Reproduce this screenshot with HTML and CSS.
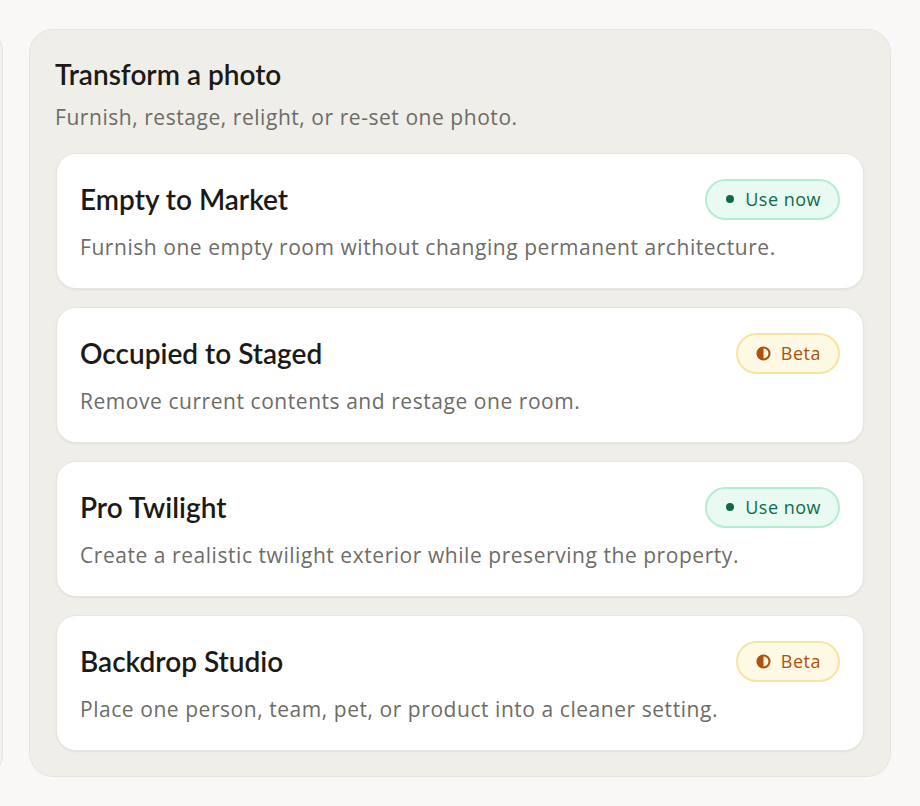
FILE: index.html
```html
<!DOCTYPE html>
<html lang="en">
<head>
<meta charset="utf-8">
<title>Transform a photo</title>
<link rel="stylesheet" href="styles.css">
</head>
<body>
<div class="layout">
  <aside class="side-panel"></aside>
  <section class="panel">
    <header class="panel-head">
      <h2 class="panel-title">Transform a photo</h2>
      <p class="panel-sub">Furnish, restage, relight, or re-set one photo.</p>
    </header>
    <div class="cards">
      <article class="card">
        <div class="card-top">
          <h3 class="card-title">Empty to Market</h3>
          <span class="badge badge-ready"><span class="dot"></span>Use now</span>
        </div>
        <p class="card-desc">Furnish one empty room without changing permanent architecture.</p>
      </article>
      <article class="card">
        <div class="card-top">
          <h3 class="card-title">Occupied to Staged</h3>
          <span class="badge badge-beta"><svg class="half" viewBox="0 0 14 14" width="15" height="15"><circle cx="7" cy="7" r="5.6" fill="none" stroke="currentColor" stroke-width="2"/><path d="M7 1.4 A5.6 5.6 0 0 0 7 12.6 Z" fill="currentColor"/></svg>Beta</span>
        </div>
        <p class="card-desc">Remove current contents and restage one room.</p>
      </article>
      <article class="card">
        <div class="card-top">
          <h3 class="card-title">Pro Twilight</h3>
          <span class="badge badge-ready"><span class="dot"></span>Use now</span>
        </div>
        <p class="card-desc">Create a realistic twilight exterior while preserving the property.</p>
      </article>
      <article class="card">
        <div class="card-top">
          <h3 class="card-title">Backdrop Studio</h3>
          <span class="badge badge-beta"><svg class="half" viewBox="0 0 14 14" width="15" height="15"><circle cx="7" cy="7" r="5.6" fill="none" stroke="currentColor" stroke-width="2"/><path d="M7 1.4 A5.6 5.6 0 0 0 7 12.6 Z" fill="currentColor"/></svg>Beta</span>
        </div>
        <p class="card-desc">Place one person, team, pet, or product into a cleaner setting.</p>
      </article>
    </div>
  </section>
</div>
</body>
</html>
```
FILE: styles.css
```css
* { box-sizing: border-box; }
html, body { margin: 0; padding: 0; }
body {
  background: #f9f8f6;
  font-family: "Open Sans", "Noto Sans", sans-serif;
  color: #1c1b19;
  width: 920px;
  height: 806px;
  overflow: hidden;
}
.layout {
  display: flex;
  gap: 26px;
  padding: 29px 0;
  margin-left: -297px;
}
.side-panel {
  flex: 0 0 300px;
  background: #f1f0ec;
  border: 1px solid #e4e3dd;
  border-radius: 22px;
}
.panel {
  flex: 0 0 862px;
  height: 748px;
  background: #efeee9;
  border: 1px solid #e5e4de;
  border-radius: 24px;
  padding: 24px 26px 26px 25px;
}
.panel-head { margin-bottom: 22px; }
.panel-title {
  margin: 0;
  font-family: "Lato", sans-serif;
  font-weight: 600;
  font-size: 28px;
  line-height: 40px;
  color: #1b1a17;
}
.panel-sub {
  margin: 9px 0 0;
  font-size: 21px;
  line-height: 28px;
  color: #6d6c67;
  letter-spacing: 0.55px;
}
.cards {
  display: flex;
  flex-direction: column;
  gap: 18px;
  padding-left: 1px;
}
.card {
  background: #ffffff;
  border: 1px solid #e6e5df;
  border-radius: 20px;
  box-shadow: 0 1px 2px rgba(60, 55, 40, 0.07);
  height: 136px;
  padding: 24px 23px 0 23px;
}
.card-top {
  display: flex;
  align-items: center;
  justify-content: space-between;
  height: 42px;
}
.card-title {
  margin: 0;
  font-family: "Lato", sans-serif;
  font-weight: 600;
  font-size: 28px;
  color: #1b1a17;
}
.card-desc {
  margin: 13px 0 0;
  font-size: 21px;
  line-height: 28px;
  color: #6d6c67;
  letter-spacing: 0.55px;
}
.badge {
  display: inline-flex;
  align-items: center;
  gap: 11px;
  height: 41px;
  padding: 0 17px 0 19px;
  border-radius: 999px;
  border: 2px solid;
  font-size: 18px;
  font-weight: 500;
  letter-spacing: 0.5px;
}
.badge-ready {
  background: #e9faf2;
  border-color: #b5ecd4;
  color: #0f6b47;
}
.badge-beta {
  background: #fef9e5;
  border-color: #f8e3a0;
  color: #b0500a;
  padding: 0 17px 0 18px;
  gap: 10px;
}
.dot {
  width: 8px;
  height: 8px;
  border-radius: 50%;
  background: #0f6b47;
}
.half { display: block; }
```
